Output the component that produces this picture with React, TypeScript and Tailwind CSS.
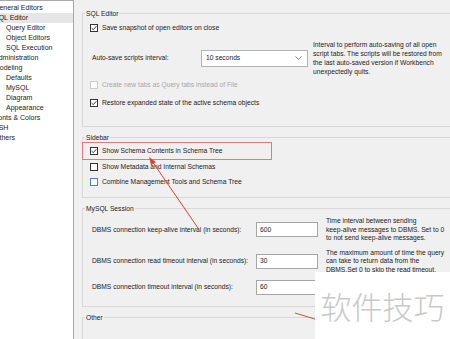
import React from 'react';

const tree = [
  { label: 'General Editors', child: false },
  { label: 'SQL Editor', child: false, selected: true },
  { label: 'Query Editor', child: true },
  { label: 'Object Editors', child: true },
  { label: 'SQL Execution', child: true },
  { label: 'Administration', child: false },
  { label: 'Modeling', child: false },
  { label: 'Defaults', child: true },
  { label: 'MySQL', child: true },
  { label: 'Diagram', child: true },
  { label: 'Appearance', child: true },
  { label: 'Fonts & Colors', child: false },
  { label: 'SSH', child: false },
  { label: 'Others', child: false },
];

function Check({ checked, variant = 'normal' }: { checked?: boolean; variant?: 'normal' | 'disabled' | 'hover' }) {
  const border =
    variant === 'disabled' ? 'border-[#cccccc]' : variant === 'hover' ? 'border-[#3f86d0]' : 'border-[#333333]';
  return (
    <span className={`flex w-[8px] h-[8px] shrink-0 items-center justify-center border bg-white ${border}`}>
      {checked && (
        <svg width="6" height="6" viewBox="0 0 6 6">
          <path d="M0.6 3 L2.3 4.7 L5.4 1.2" fill="none" stroke="#222" strokeWidth="0.9" />
        </svg>
      )}
    </span>
  );
}

function CheckRow({ label, checked, variant, className }: { label: string; checked?: boolean; variant?: 'normal' | 'disabled' | 'hover'; className?: string }) {
  return (
    <div className={`flex h-[10px] items-center gap-[4px] pl-[7px] ${className ?? ''}`}>
      <Check checked={checked} variant={variant} />
      <span className={variant === 'disabled' ? 'text-[#a8a8a8]' : ''}>{label}</span>
    </div>
  );
}

function Group({ label, className, children }: { label: string; className?: string; children?: React.ReactNode }) {
  return (
    <div className={`relative shrink-0 border border-[#d8d8d8] ${className ?? ''}`}>
      <span className="absolute left-[2px] top-[-5px] bg-[#f0f0f0] px-[1px] leading-[9px]">{label}</span>
      {children}
    </div>
  );
}

function SessionRow({ label, value, help, className }: { label: string; value: string; help?: string[]; className?: string }) {
  return (
    <div className={`flex items-center pl-[9px] ${className ?? ''}`}>
      <span className="w-[164px] shrink-0">{label}</span>
      <div className="flex h-[15px] w-[62px] shrink-0 items-center border border-[#a6a6a6] bg-white pl-[3px]">{value}</div>
      {help && (
        <div className="ml-[8px] whitespace-nowrap leading-[8.5px]">
          {help.map((l) => (
            <div key={l}>{l}</div>
          ))}
        </div>
      )}
    </div>
  );
}

export default function App() {
  return (
    <div className="relative flex h-[339px] w-[450px] overflow-hidden bg-[#f0f0f0] font-['Liberation_Sans',sans-serif] text-[6.7px] text-[#222]">
      {/* Navigation tree */}
      <div className="w-[74px] shrink-0 overflow-hidden border-r border-t border-[#a8a8a8] bg-white pt-[2px]">
        {tree.map((t) => (
          <div
            key={t.label}
            className={`flex h-[10px] items-center whitespace-nowrap text-[7px] ${t.selected ? 'bg-[#e6e6e6]' : ''} ${t.child ? 'pl-[6px]' : 'ml-[-6px]'}`}
          >
            {t.label}
          </div>
        ))}
      </div>

      {/* Settings */}
      <div className="mr-[-6px] flex flex-1 flex-col pl-[8px]">
        <Group label="SQL Editor" className="mt-[13px] h-[114px]">
          <CheckRow label="Save snapshot of open editors on close" checked className="mt-[9px]" />
          <div className="mt-[7px] flex h-[36px] items-center pl-[9px]">
            <span className="w-[109px] shrink-0">Auto-save scripts interval:</span>
            <div className="flex h-[17px] w-[107px] shrink-0 items-center justify-between border border-[#b4b4b4] bg-white pl-[4px] pr-[5px]">
              <span>10 seconds</span>
              <svg width="7" height="4" viewBox="0 0 7 4">
                <path d="M0.5 0.5 L3.5 3.3 L6.5 0.5" fill="none" stroke="#666" strokeWidth="0.8" />
              </svg>
            </div>
            <div className="ml-[5px] whitespace-nowrap leading-[9px]">
              <div>Interval to perform auto-saving of all open</div>
              <div>script tabs. The scripts will be restored from</div>
              <div>the last auto-saved version if Workbench</div>
              <div>unexpectedly quits.</div>
            </div>
          </div>
          <CheckRow label="Create new tabs as Query tabs instead of File" variant="disabled" className="mt-[4px]" />
          <CheckRow label="Restore expanded state of the active schema objects" checked className="mt-[8px]" />
        </Group>

        <Group label="Sidebar" className="mt-[10px] h-[61px]">
          <div className="absolute left-[-1px] top-[4px] h-[18px] w-[190px] border border-[#e27a7a]" />
          <CheckRow label="Show Schema Contents in Schema Tree" checked className="mt-[8px]" />
          <CheckRow label="Show Metadata and Internal Schemas" className="mt-[6px]" />
          <CheckRow label="Combine Management Tools and Schema Tree" variant="hover" className="mt-[5px]" />
        </Group>

        <Group label="MySQL Session" className="mt-[10px] h-[99px]">
          <SessionRow
            label="DBMS connection keep-alive interval (in seconds):"
            value="600"
            help={['Time interval between sending', 'keep-alive messages to DBMS. Set to 0', 'to not send keep-alive messages.']}
            className="mt-[8px]"
          />
          <SessionRow
            label="DBMS connection read timeout interval (in seconds):"
            value="30"
            help={['The maximum amount of time the query', 'can take to return data from the', 'DBMS.Set 0 to skip the read timeout.']}
            className="mt-[6px]"
          />
          <SessionRow label="DBMS connection timeout interval (in seconds):" value="60" className="mt-[6px]" />
        </Group>

        <Group label="Other" className="mt-[10px] h-[40px]" />
      </div>

      {/* Annotation arrows */}
      <svg className="pointer-events-none absolute left-0 top-0" width="450" height="339" viewBox="0 0 450 339">
        <line x1="198" y1="228" x2="152" y2="161" stroke="#d9453c" strokeWidth="1" />
        <polygon points="149,157 156,161.9 151,165.3" fill="#d9453c" />
        <line x1="295" y1="313" x2="318" y2="320" stroke="#d9453c" strokeWidth="1" />
      </svg>

      {/* Watermark */}
      <div className="absolute left-[315px] top-[272px] flex h-[67px] w-[135px] items-center justify-center bg-white">
        <span className="font-['Noto_Sans_CJK_SC',sans-serif] text-[31px] font-light leading-none text-[#c9c9c9]">软件技巧</span>
      </div>
    </div>
  );
}
